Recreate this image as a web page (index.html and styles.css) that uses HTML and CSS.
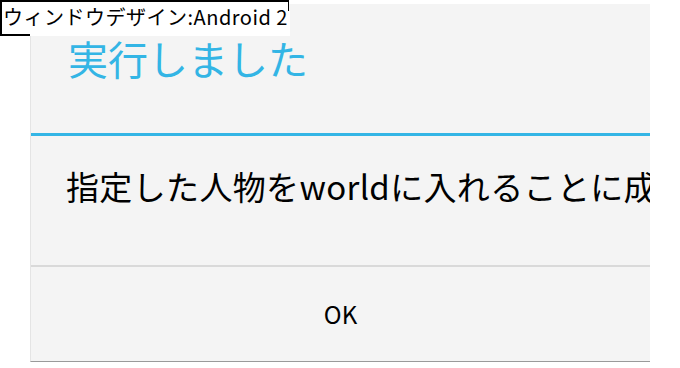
FILE: index.html
```html
<!DOCTYPE html>
<html lang="ja">
<head>
    <meta charset="UTF-8">
    <meta name="viewport" content="width=device-width, initial-scale=1.0">
    <title>ウィンドウデザイン:Android 2</title>
    <link rel="stylesheet" href="styles.css">
</head>
<body>
    <div class="caption"><span>ウィンドウデザイン:Android 2</span></div>

    <div class="dialog">
        <div class="dialog-header">
            <div class="dialog-title">実行しました</div>
        </div>
        <div class="dialog-body">
            <div class="dialog-message">指定した人物をworldに入れることに成功しました</div>
        </div>
        <div class="dialog-button">OK</div>
    </div>
</body>
</html>
```

FILE: styles.css
```css
* {
    margin: 0;
    padding: 0;
    box-sizing: border-box;
}

body {
    font-family: "Noto Sans CJK JP", "Noto Sans", sans-serif;
    background: #ffffff;
    width: 680px;
    height: 368px;
    position: relative;
    overflow: hidden;
}

/* ラベル */
.caption {
    position: absolute;
    left: 0;
    top: 0;
    width: 289px;
    height: 36px;
    border: 2px solid #000;
    border-right-width: 1px;
    background: #fff;
    z-index: 2;
}

.caption::after {
    content: "";
    position: absolute;
    left: 28px;
    top: 9px;
    right: -2px;
    bottom: -2px;
    background: #fff;
}

.caption span {
    position: relative;
    z-index: 1;
    display: block;
    font-size: 20px;
    line-height: 30px;
    color: #000;
    padding-left: 1px;
    white-space: nowrap;
    letter-spacing: 0.5px;
}

/* ダイアログ */
.dialog {
    margin: 4px 0 0 30px;
    width: 620px;
    height: 358px;
    background: #f4f4f4;
    border-left: 1px solid #e4e4e4;
    border-bottom: 1px solid #9a9a9a;
    overflow: hidden;
    display: flex;
    flex-direction: column;
}

.dialog-header {
    height: 132px;
    border-bottom: 3px solid #33b5e5;
    padding: 34px 0 0 37px;
}

.dialog-title {
    font-size: 40px;
    line-height: 1;
    color: #33b5e5;
}

.dialog-body {
    height: 131px;
    border-bottom: 2px solid #d9d9d9;
    padding: 31px 0 0 35px;
}

.dialog-message {
    font-size: 33px;
    line-height: 1.2;
    color: #000;
    white-space: nowrap;
    letter-spacing: 0.35px;
}

.dialog-button {
    flex: 1;
    display: flex;
    align-items: center;
    justify-content: center;
    font-size: 24px;
    color: #000;
    padding-bottom: 2px;
}
```
